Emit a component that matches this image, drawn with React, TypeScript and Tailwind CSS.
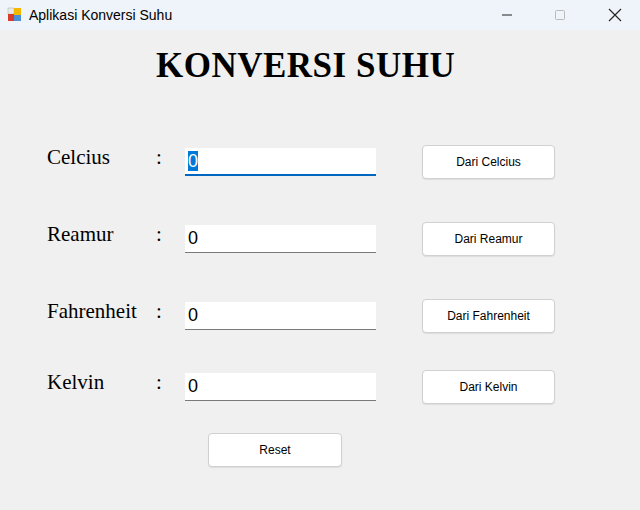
export default function App() {
  const rows = [
    { label: 'Celcius', btn: 'Dari Celcius', mt: 'mt-[62px]', focus: true },
    { label: 'Reamur', btn: 'Dari Reamur', mt: 'mt-[43px]', focus: false },
    { label: 'Fahrenheit', btn: 'Dari Fahrenheit', mt: 'mt-[43px]', focus: false },
    { label: 'Kelvin', btn: 'Dari Kelvin', mt: 'mt-[37px]', focus: false },
  ];
  const serif = { fontFamily: '"Liberation Serif", serif' };
  const sans = { fontFamily: '"Liberation Sans", Arial, sans-serif' };

  return (
    <div className="w-[640px] h-[510px] bg-[#f0f0f0] flex flex-col overflow-hidden" style={sans}>
      {/* Title bar */}
      <div className="h-[30px] bg-[#eef4f9] flex items-center shrink-0">
        <svg width="16" height="16" viewBox="0 0 16 16" className="ml-[7px]">
          <rect x="1" y="1" width="6" height="6" fill="#e8e8e8" stroke="#b0b0b0" strokeWidth="0.5" />
          <rect x="7" y="1" width="7" height="7" fill="#f5b800" />
          <rect x="1" y="7" width="6" height="7" fill="#d83b2b" />
          <rect x="7" y="8" width="7" height="6" fill="#4a8fd8" />
        </svg>
        <span className="ml-[6px] text-[14px] text-black">Aplikasi Konversi Suhu</span>
        <div className="ml-auto flex items-center h-full">
          <div className="w-[46px] flex justify-center">
            <svg width="12" height="12" viewBox="0 0 12 12"><path d="M1 6h10" stroke="#222" strokeWidth="1" /></svg>
          </div>
          <div className="w-[60px] flex justify-center">
            <svg width="12" height="12" viewBox="0 0 12 12"><rect x="1.5" y="1.5" width="9" height="9" rx="1" fill="none" stroke="#bbb" /></svg>
          </div>
          <div className="w-[50px] flex justify-center">
            <svg width="14" height="14" viewBox="0 0 14 14"><path d="M1 1l12 12M13 1L1 13" stroke="#222" strokeWidth="1.1" /></svg>
          </div>
        </div>
      </div>

      {/* Title */}
      <div className="mt-[17px] h-[36px] flex items-center pl-[156px]">
        <span className="text-[35px] tracking-[0.5px] font-bold text-black leading-none" style={serif}>KONVERSI SUHU</span>
      </div>

      {rows.map((r) => (
        <div key={r.label} className={`${r.mt} h-[34px] flex items-center pl-[47px]`}>
          <span className="w-[109px] text-[21px] text-black -mt-[9px]" style={serif}>{r.label}</span>
          <span className="w-[29px] text-[21px] text-black -mt-[9px]" style={serif}>:</span>
          <div
            className={`w-[191px] h-[28px] bg-white flex items-center pl-[3px] text-[18px] ${
              r.focus ? 'border-b-2 border-[#0067c0]' : 'border-b border-[#7a7a7a]'
            }`}
          >
            {r.focus ? <span className="bg-[#0078d7] text-white leading-[20px]">0</span> : <span className="text-black">0</span>}
          </div>
          <button className="ml-[46px] w-[133px] h-[34px] bg-white border border-[#d0d0d0] rounded-[4px] shadow-[0_1px_1px_rgba(0,0,0,0.08)] text-[12px] text-black">
            {r.btn}
          </button>
        </div>
      ))}

      <div className="mt-[29px] pl-[208px]">
        <button className="w-[134px] h-[34px] bg-white border border-[#d0d0d0] rounded-[4px] shadow-[0_1px_1px_rgba(0,0,0,0.08)] text-[12px] text-black">
          Reset
        </button>
      </div>
    </div>
  );
}
